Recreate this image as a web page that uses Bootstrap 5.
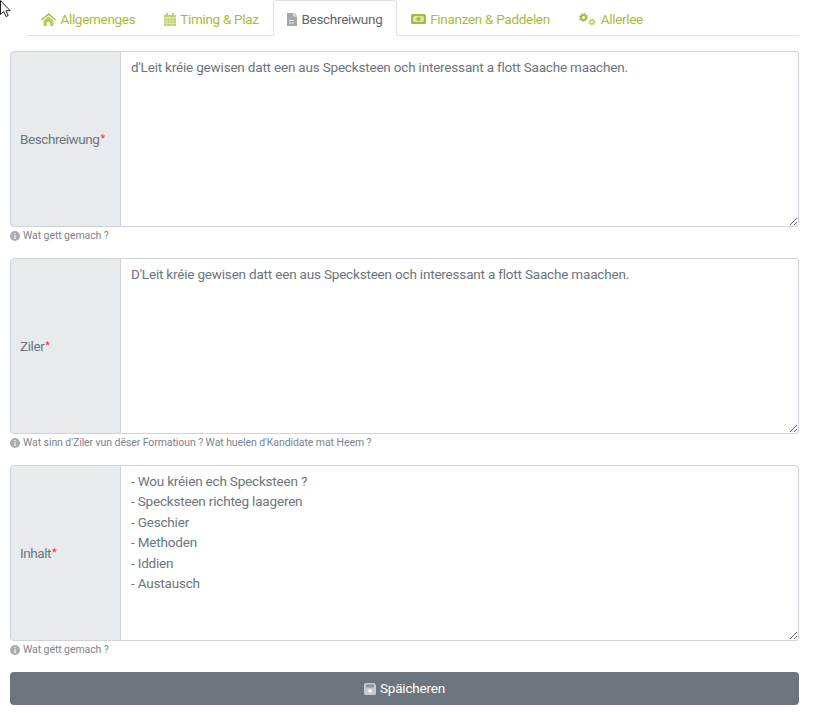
<!DOCTYPE html>
<html lang="lb">
<head>
<meta charset="utf-8">
<title>Formatioun</title>
<link rel="stylesheet" href="https://cdn.jsdelivr.net/npm/bootstrap@5.3.0/dist/css/bootstrap.min.css">
<style>
html,body{height:713px;overflow:hidden}
body{font-family:Roboto,"Liberation Sans",sans-serif;color:#6c757d;background:#fff;font-size:13.5px;letter-spacing:-.19px}
.page-wrap{padding:0 21px 0 10px}
.tab-bar{margin-left:17px;border-bottom:1px solid #dee2e6;height:36px;flex-wrap:nowrap}
.tab-bar .nav-link{color:#a9bb3c;height:36px;padding:2px 13.400px 0;font-size:13.5px;letter-spacing:-.3px;display:flex;align-items:center;gap:4px;border:1px solid transparent;border-radius:4px 4px 0 0;white-space:nowrap}
.tab-bar .nav-link.active{color:#5f6770;background:#fff;border-color:#dee2e6 #dee2e6 #fff}
.tab-bar svg{flex:none}
.field-group{height:176px;margin-top:15px}
.field-label{width:111px;flex:none;background:#e8ebee;border:1px solid #ced4da;border-radius:4px 0 0 4px;color:#6c757d;font-size:13.5px;letter-spacing:-.42px;padding:0 9px;display:flex;align-items:center}
.req{color:#e33;font-size:11px;margin-left:1px}
.field-text{flex:1;min-width:0;border:1px solid #ced4da;border-left:0;border-radius:0 4px 4px 0;padding:4.500px 10px;font-family:inherit;font-size:13.5px;line-height:20.5px;letter-spacing:inherit;color:#6c757d;resize:vertical;outline:0}
.help-line{height:17px;font-size:10.5px;letter-spacing:-.08px;color:#7b848c;display:flex;align-items:center;gap:3px;margin-bottom:-1px}
.save-btn{height:33px;margin-top:15px;background:#6c757d;border:0;border-radius:4px;color:#fff;font-size:13.5px;letter-spacing:inherit;display:flex;align-items:center;justify-content:center;gap:4px;padding:0}
.arrow-cursor{position:absolute;left:0;top:0}
</style>
</head>
<body>
<svg class="arrow-cursor" width="12" height="18" viewBox="0 0 12 18"><path d="M.5.5v14l3.200-3 2.300 5 2.200-1-2.300-4.800h4.300z" fill="#fff" stroke="#222" stroke-width="1"/></svg>
<div class="page-wrap">
  <ul class="nav nav-tabs tab-bar">
    <li class="nav-item"><a class="nav-link" href="#"><svg width="15" height="13" viewBox="0 0 15 13"><path d="M7.500 0 0 6.500l.8 1L7.500 2l6.700 5.500.8-1z" fill="#a9bb3c"/><path d="M2.500 7.500 7.500 3.300l5 4.200V13H9V9H6v4H2.500z" fill="#bdcb66"/></svg>Allgemenges</a></li>
    <li class="nav-item"><a class="nav-link" href="#"><svg width="12" height="13" viewBox="0 0 12 13"><path d="M0 2h2V0h2v2h4V0h2v2h2v2.500H0zM0 5.300h12V13H0z" fill="#c1cd6e"/><path d="M0 8h12M0 10.500h12M3 5.300V13M6 5.300V13M9 5.300V13" stroke="#eef1d5" stroke-width=".6"/></svg>Timing &amp; Plaz</a></li>
    <li class="nav-item"><a class="nav-link active" href="#"><svg width="10" height="13" viewBox="0 0 10 13"><path d="M0 0h6.500v3.500H10V13H0zM7.500 0 10 2.500H7.500z" fill="#a3a8ad"/><path d="M2 7.500h5M2 10h5" stroke="#fff" stroke-width=".8"/></svg>Beschreiwung</a></li>
    <li class="nav-item"><a class="nav-link" href="#"><svg width="15" height="10" viewBox="0 0 15 10"><rect width="15" height="10" rx="1.500" fill="#a9bb3c"/><rect x="2" y="2" width="11" height="6" rx="2" fill="#dde4ab"/><circle cx="7.500" cy="5" r="2" fill="#a9bb3c"/></svg>Finanzen &amp; Paddelen</a></li>
    <li class="nav-item"><a class="nav-link" href="#"><svg width="18" height="13" viewBox="0 0 18 13"><circle cx="4.500" cy="4.500" r="2.500" fill="none" stroke="#a9bb3c" stroke-width="2"/><circle cx="4.500" cy="4.500" r="3.900" fill="none" stroke="#a9bb3c" stroke-width="1.200" stroke-dasharray="1.500 1.560"/><circle cx="13" cy="9" r="1.900" fill="none" stroke="#c1cd6e" stroke-width="1.600"/><circle cx="13" cy="9" r="3.200" fill="none" stroke="#c1cd6e" stroke-width="1" stroke-dasharray="1.300 1.210"/></svg>Allerlee</a></li>
  </ul>

  <div class="d-flex field-group">
    <label class="field-label">Beschreiwung<span class="req">*</span></label>
    <textarea class="field-text">d'Leit kréie gewisen datt een aus Specksteen och interessant a flott Saache maachen.</textarea>
  </div>
  <div class="help-line"><svg width="10" height="10" viewBox="0 0 10 10"><circle cx="5" cy="5" r="5" fill="#a8adb2"/><path d="M5 2v1.200M5 4.300V8" stroke="#fff" stroke-width="1.100"/></svg>Wat gett gemach ?</div>

  <div class="d-flex field-group">
    <label class="field-label">Ziler<span class="req">*</span></label>
    <textarea class="field-text">D'Leit kréie gewisen datt een aus Specksteen och interessant a flott Saache maachen.</textarea>
  </div>
  <div class="help-line"><svg width="10" height="10" viewBox="0 0 10 10"><circle cx="5" cy="5" r="5" fill="#a8adb2"/><path d="M5 2v1.200M5 4.300V8" stroke="#fff" stroke-width="1.100"/></svg>Wat sinn d'Ziler vun dëser Formatioun ? Wat huelen d'Kandidate mat Heem ?</div>

  <div class="d-flex field-group">
    <label class="field-label">Inhalt<span class="req">*</span></label>
    <textarea class="field-text">- Wou kréien ech Specksteen ?
- Specksteen richteg laageren
- Geschier
- Methoden
- Iddien
- Austausch</textarea>
  </div>
  <div class="help-line"><svg width="10" height="10" viewBox="0 0 10 10"><circle cx="5" cy="5" r="5" fill="#a8adb2"/><path d="M5 2v1.200M5 4.300V8" stroke="#fff" stroke-width="1.100"/></svg>Wat gétt gemach ?</div>

  <button type="button" class="btn save-btn w-100"><svg width="12" height="12" viewBox="0 0 12 12"><path d="M0 1.500A1.500 1.500 0 0 1 1.500 0H10l2 2v8.500a1.500 1.500 0 0 1-1.500 1.500h-9A1.500 1.500 0 0 1 0 10.500z" fill="#c6cacd"/><rect x="2" y="1.500" width="8" height="3" fill="#8a9197"/><circle cx="6" cy="8" r="1.800" fill="#fff"/></svg>Späicheren</button>
</div>
<script src="https://cdn.jsdelivr.net/npm/bootstrap@5.3.0/dist/js/bootstrap.bundle.min.js"></script>
</body>
</html>
